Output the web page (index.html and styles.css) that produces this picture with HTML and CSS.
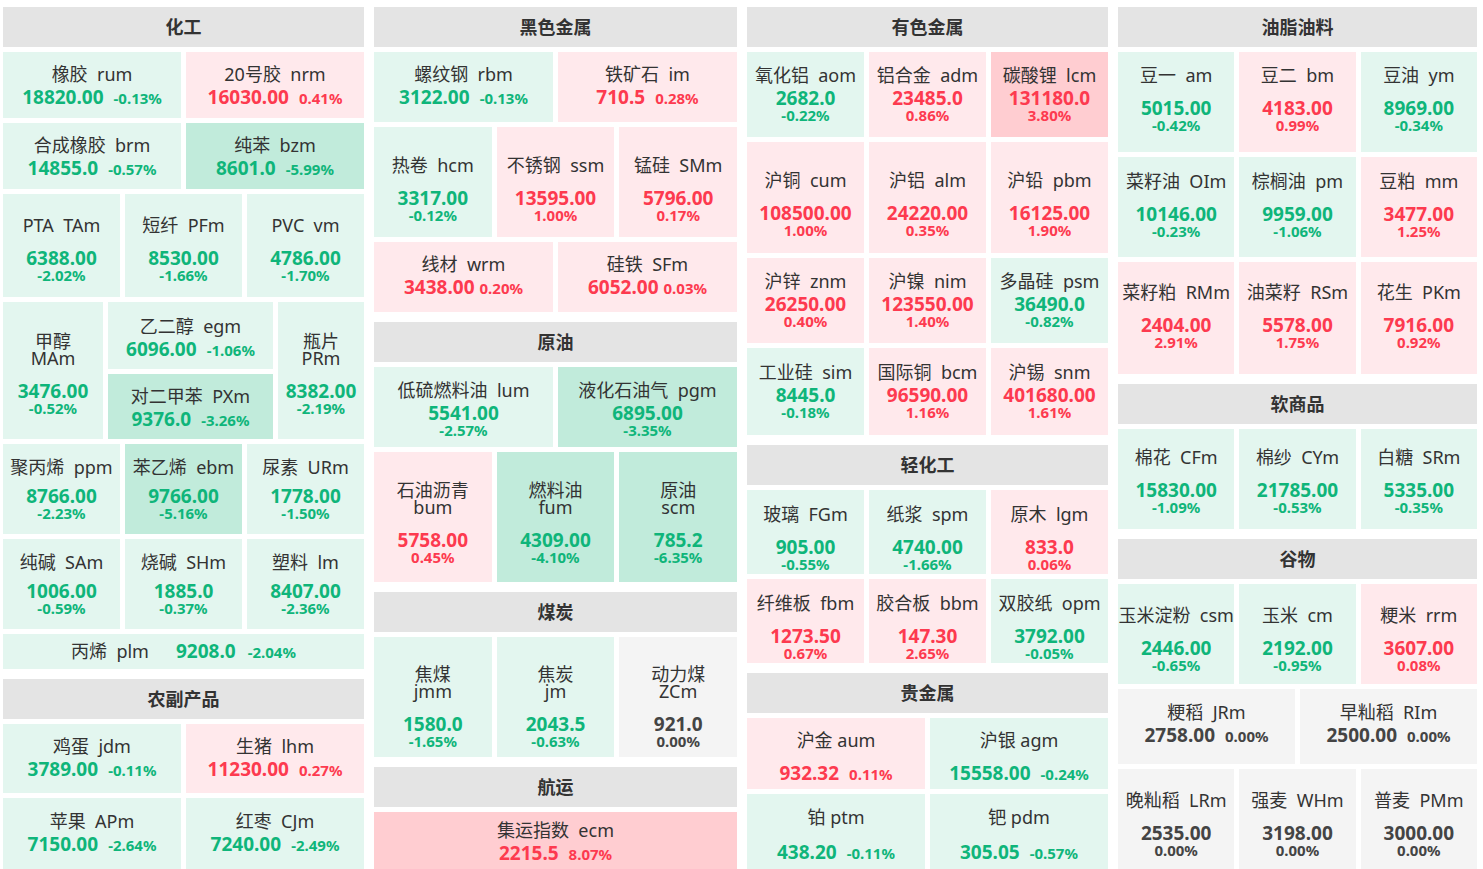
FILE: index.html
```html
<!DOCTYPE html>
<html lang="zh-CN">
<head>
<meta charset="utf-8">
<title>期货板块行情</title>
<link rel="stylesheet" href="styles.css">
</head>
<body>
<main class="board">
  <div class="col">
    <section class="sec">
      <h2 class="hd">化工</h2>
      <div class="row h66">
        <div class="t g1 pt4"><div class="nm">橡胶&nbsp; rum</div><div class="ln"><b class="v">18820.00</b><b class="p">-0.13%</b></div></div>
        <div class="t r1 pt4"><div class="nm">20号胶&nbsp; nrm</div><div class="ln"><b class="v">16030.00</b><b class="p">0.41%</b></div></div>
      </div>
      <div class="row h66">
        <div class="t g1 pt4"><div class="nm">合成橡胶&nbsp; brm</div><div class="ln"><b class="v">14855.0</b><b class="p">-0.57%</b></div></div>
        <div class="t g2 pt4"><div class="nm">纯苯&nbsp; bzm</div><div class="ln"><b class="v">8601.0</b><b class="p">-5.99%</b></div></div>
      </div>
      <div class="row h103">
        <div class="t g1 lo pt8"><div class="nm">PTA&nbsp; TAm</div><b class="v">6388.00</b><b class="p">-2.02%</b></div>
        <div class="t g1 lo pt8"><div class="nm">短纤&nbsp; PFm</div><b class="v">8530.00</b><b class="p">-1.66%</b></div>
        <div class="t g1 lo pt8"><div class="nm">PVC&nbsp; vm</div><b class="v">4786.00</b><b class="p">-1.70%</b></div>
      </div>
      <div class="row h137">
        <div class="t g1 lo pt6 w100"><div class="nm">甲醇<br>MAm</div><b class="v">3476.00</b><b class="p">-0.52%</b></div>
        <div class="stk w165">
          <div class="t g1 pt6"><div class="nm">乙二醇&nbsp; egm</div><div class="ln"><b class="v">6096.00</b><b class="p">-1.06%</b></div></div>
          <div class="t g2 pt4"><div class="nm">对二甲苯&nbsp; PXm</div><div class="ln"><b class="v">9376.0</b><b class="p">-3.26%</b></div></div>
        </div>
        <div class="t g1 lo pt6"><div class="nm">瓶片<br>PRm</div><b class="v">8382.00</b><b class="p">-2.19%</b></div>
      </div>
      <div class="row h90">
        <div class="t g1 md"><div class="nm">聚丙烯&nbsp; ppm</div><b class="v">8766.00</b><b class="p">-2.23%</b></div>
        <div class="t g2 md"><div class="nm">苯乙烯&nbsp; ebm</div><b class="v">9766.00</b><b class="p">-5.16%</b></div>
        <div class="t g1 md"><div class="nm">尿素&nbsp; URm</div><b class="v">1778.00</b><b class="p">-1.50%</b></div>
      </div>
      <div class="row h90">
        <div class="t g1 md"><div class="nm">纯碱&nbsp; SAm</div><b class="v">1006.00</b><b class="p">-0.59%</b></div>
        <div class="t g1 md"><div class="nm">烧碱&nbsp; SHm</div><b class="v">1885.0</b><b class="p">-0.37%</b></div>
        <div class="t g1 md"><div class="nm">塑料&nbsp; lm</div><b class="v">8407.00</b><b class="p">-2.36%</b></div>
      </div>
      <div class="row h35">
        <div class="t g1 one"><span class="nm">丙烯&nbsp; plm</span><b class="v">9208.0</b><b class="p">-2.04%</b></div>
      </div>
    </section>
    <section class="sec">
      <h2 class="hd">农副产品</h2>
      <div class="row h69">
        <div class="t g1"><div class="nm">鸡蛋&nbsp; jdm</div><div class="ln"><b class="v">3789.00</b><b class="p">-0.11%</b></div></div>
        <div class="t r1"><div class="nm">生猪&nbsp; lhm</div><div class="ln"><b class="v">11230.00</b><b class="p">0.27%</b></div></div>
      </div>
      <div class="row h71">
        <div class="t g1"><div class="nm">苹果&nbsp; APm</div><div class="ln"><b class="v">7150.00</b><b class="p">-2.64%</b></div></div>
        <div class="t g1"><div class="nm">红枣&nbsp; CJm</div><div class="ln"><b class="v">7240.00</b><b class="p">-2.49%</b></div></div>
      </div>
    </section>
  </div>

  <div class="col">
    <section class="sec">
      <h2 class="hd">黑色金属</h2>
      <div class="row h70">
        <div class="t g1"><div class="nm">螺纹钢&nbsp; rbm</div><div class="ln"><b class="v">3122.00</b><b class="p">-0.13%</b></div></div>
        <div class="t r1"><div class="nm">铁矿石&nbsp; im</div><div class="ln"><b class="v">710.5</b><b class="p">0.28%</b></div></div>
      </div>
      <div class="row h110">
        <div class="t g1 lo pt14"><div class="nm">热卷&nbsp; hcm</div><b class="v">3317.00</b><b class="p">-0.12%</b></div>
        <div class="t r1 lo pt14"><div class="nm">不锈钢&nbsp; ssm</div><b class="v">13595.00</b><b class="p">1.00%</b></div>
        <div class="t r1 lo pt14"><div class="nm">锰硅&nbsp; SMm</div><b class="v">5796.00</b><b class="p">0.17%</b></div>
      </div>
      <div class="row h70">
        <div class="t r1"><div class="nm">线材&nbsp; wrm</div><div class="ln tg"><b class="v">3438.00</b><b class="p">0.20%</b></div></div>
        <div class="t r1"><div class="nm">硅铁&nbsp; SFm</div><div class="ln tg"><b class="v">6052.00</b><b class="p">0.03%</b></div></div>
      </div>
    </section>
    <section class="sec">
      <h2 class="hd">原油</h2>
      <div class="row h80">
        <div class="t g1 pt4"><div class="nm">低硫燃料油&nbsp; lum</div><b class="v">5541.00</b><b class="p">-2.57%</b></div>
        <div class="t g2 pt4"><div class="nm">液化石油气&nbsp; pgm</div><b class="v">6895.00</b><b class="p">-3.35%</b></div>
      </div>
      <div class="row h130">
        <div class="t r1 lo pt12"><div class="nm">石油沥青<br>bum</div><b class="v">5758.00</b><b class="p">0.45%</b></div>
        <div class="t g2 lo pt12"><div class="nm">燃料油<br>fum</div><b class="v">4309.00</b><b class="p">-4.10%</b></div>
        <div class="t g2 lo pt12"><div class="nm">原油<br>scm</div><b class="v">785.2</b><b class="p">-6.35%</b></div>
      </div>
    </section>
    <section class="sec">
      <h2 class="hd">煤炭</h2>
      <div class="row h120">
        <div class="t g1 lo pt20"><div class="nm">焦煤<br>jmm</div><b class="v">1580.0</b><b class="p">-1.65%</b></div>
        <div class="t g1 lo pt20"><div class="nm">焦炭<br>jm</div><b class="v">2043.5</b><b class="p">-0.63%</b></div>
        <div class="t z lo pt20"><div class="nm">动力煤<br>ZCm</div><b class="v">921.0</b><b class="p">0.00%</b></div>
      </div>
    </section>
    <section class="sec">
      <h2 class="hd">航运</h2>
      <div class="row h57">
        <div class="t r2 pt4"><div class="nm">集运指数&nbsp; ecm</div><div class="ln"><b class="v">2215.5</b><b class="p">8.07%</b></div></div>
      </div>
    </section>
  </div>

  <div class="col">
    <section class="sec">
      <h2 class="hd">有色金属</h2>
      <div class="row h85">
        <div class="t g1"><div class="nm">氧化铝&nbsp; aom</div><b class="v">2682.0</b><b class="p">-0.22%</b></div>
        <div class="t r1"><div class="nm">铝合金&nbsp; adm</div><b class="v">23485.0</b><b class="p">0.86%</b></div>
        <div class="t r2"><div class="nm">碳酸锂&nbsp; lcm</div><b class="v">131180.0</b><b class="p">3.80%</b></div>
      </div>
      <div class="row h111">
        <div class="t r1 lo pt14"><div class="nm">沪铜&nbsp; cum</div><b class="v">108500.00</b><b class="p">1.00%</b></div>
        <div class="t r1 lo pt14"><div class="nm">沪铝&nbsp; alm</div><b class="v">24220.00</b><b class="p">0.35%</b></div>
        <div class="t r1 lo pt14"><div class="nm">沪铅&nbsp; pbm</div><b class="v">16125.00</b><b class="p">1.90%</b></div>
      </div>
      <div class="row h85">
        <div class="t r1"><div class="nm">沪锌&nbsp; znm</div><b class="v">26250.00</b><b class="p">0.40%</b></div>
        <div class="t r1"><div class="nm">沪镍&nbsp; nim</div><b class="v">123550.00</b><b class="p">1.40%</b></div>
        <div class="t g1"><div class="nm">多晶硅&nbsp; psm</div><b class="v">36490.0</b><b class="p">-0.82%</b></div>
      </div>
      <div class="row h87">
        <div class="t g1"><div class="nm">工业硅&nbsp; sim</div><b class="v">8445.0</b><b class="p">-0.18%</b></div>
        <div class="t r1"><div class="nm">国际铜&nbsp; bcm</div><b class="v">96590.00</b><b class="p">1.16%</b></div>
        <div class="t r1"><div class="nm">沪锡&nbsp; snm</div><b class="v">401680.00</b><b class="p">1.61%</b></div>
      </div>
    </section>
    <section class="sec">
      <h2 class="hd">轻化工</h2>
      <div class="row h84">
        <div class="t g1 lo pt12"><div class="nm">玻璃&nbsp; FGm</div><b class="v">905.00</b><b class="p">-0.55%</b></div>
        <div class="t g1 lo pt12"><div class="nm">纸浆&nbsp; spm</div><b class="v">4740.00</b><b class="p">-1.66%</b></div>
        <div class="t r1 lo pt12"><div class="nm">原木&nbsp; lgm</div><b class="v">833.0</b><b class="p">0.06%</b></div>
      </div>
      <div class="row h84">
        <div class="t r1 lo pt12"><div class="nm">纤维板&nbsp; fbm</div><b class="v">1273.50</b><b class="p">0.67%</b></div>
        <div class="t r1 lo pt12"><div class="nm">胶合板&nbsp; bbm</div><b class="v">147.30</b><b class="p">2.65%</b></div>
        <div class="t g1 lo pt12"><div class="nm">双胶纸&nbsp; opm</div><b class="v">3792.00</b><b class="p">-0.05%</b></div>
      </div>
    </section>
    <section class="sec">
      <h2 class="hd">贵金属</h2>
      <div class="row h71">
        <div class="t r1 lo pt8"><div class="nm">沪金 aum</div><div class="ln"><b class="v">932.32</b><b class="p">0.11%</b></div></div>
        <div class="t g1 lo pt8"><div class="nm">沪银 agm</div><div class="ln"><b class="v">15558.00</b><b class="p">-0.24%</b></div></div>
      </div>
      <div class="row h75">
        <div class="t g1 lx pt8"><div class="nm">铂 ptm</div><div class="ln"><b class="v">438.20</b><b class="p">-0.11%</b></div></div>
        <div class="t g1 lx pt8"><div class="nm">钯 pdm</div><div class="ln"><b class="v">305.05</b><b class="p">-0.57%</b></div></div>
      </div>
    </section>
  </div>

  <div class="col">
    <section class="sec">
      <h2 class="hd">油脂油料</h2>
      <div class="row h100">
        <div class="t g1 lo pb6"><div class="nm">豆一&nbsp; am</div><b class="v">5015.00</b><b class="p">-0.42%</b></div>
        <div class="t r1 lo pb6"><div class="nm">豆二&nbsp; bm</div><b class="v">4183.00</b><b class="p">0.99%</b></div>
        <div class="t g1 lo pb6"><div class="nm">豆油&nbsp; ym</div><b class="v">8969.00</b><b class="p">-0.34%</b></div>
      </div>
      <div class="row h100">
        <div class="t g1 lo pb4"><div class="nm">菜籽油&nbsp; OIm</div><b class="v">10146.00</b><b class="p">-0.23%</b></div>
        <div class="t g1 lo pb4"><div class="nm">棕榈油&nbsp; pm</div><b class="v">9959.00</b><b class="p">-1.06%</b></div>
        <div class="t r1 lo pb4"><div class="nm">豆粕&nbsp; mm</div><b class="v">3477.00</b><b class="p">1.25%</b></div>
      </div>
      <div class="row h112">
        <div class="t r1 lo pb4"><div class="nm">菜籽粕&nbsp; RMm</div><b class="v">2404.00</b><b class="p">2.91%</b></div>
        <div class="t r1 lo pb4"><div class="nm">油菜籽&nbsp; RSm</div><b class="v">5578.00</b><b class="p">1.75%</b></div>
        <div class="t r1 lo pb4"><div class="nm">花生&nbsp; PKm</div><b class="v">7916.00</b><b class="p">0.92%</b></div>
      </div>
    </section>
    <section class="sec">
      <h2 class="hd">软商品</h2>
      <div class="row h100">
        <div class="t g1 lo pt4"><div class="nm">棉花&nbsp; CFm</div><b class="v">15830.00</b><b class="p">-1.09%</b></div>
        <div class="t g1 lo pt4"><div class="nm">棉纱&nbsp; CYm</div><b class="v">21785.00</b><b class="p">-0.53%</b></div>
        <div class="t g1 lo pt4"><div class="nm">白糖&nbsp; SRm</div><b class="v">5335.00</b><b class="p">-0.35%</b></div>
      </div>
    </section>
    <section class="sec">
      <h2 class="hd">谷物</h2>
      <div class="row h100">
        <div class="t g1 lo pt10"><div class="nm">玉米淀粉&nbsp; csm</div><b class="v">2446.00</b><b class="p">-0.65%</b></div>
        <div class="t g1 lo pt10"><div class="nm">玉米&nbsp; cm</div><b class="v">2192.00</b><b class="p">-0.95%</b></div>
        <div class="t r1 lo pt10"><div class="nm">粳米&nbsp; rrm</div><b class="v">3607.00</b><b class="p">0.08%</b></div>
      </div>
      <div class="row h75">
        <div class="t z pb4"><div class="nm">粳稻&nbsp; JRm</div><div class="ln"><b class="v">2758.00</b><b class="p">0.00%</b></div></div>
        <div class="t z pb4"><div class="nm">早籼稻&nbsp; RIm</div><div class="ln"><b class="v">2500.00</b><b class="p">0.00%</b></div></div>
      </div>
      <div class="row h100">
        <div class="t z lo pt10"><div class="nm">晚籼稻&nbsp; LRm</div><b class="v">2535.00</b><b class="p">0.00%</b></div>
        <div class="t z lo pt10"><div class="nm">强麦&nbsp; WHm</div><b class="v">3198.00</b><b class="p">0.00%</b></div>
        <div class="t z lo pt10"><div class="nm">普麦&nbsp; PMm</div><b class="v">3000.00</b><b class="p">0.00%</b></div>
      </div>
    </section>
  </div>
</main>
</body>
</html>
```

FILE: styles.css
```css
* { box-sizing: border-box; margin: 0; padding: 0; }
html, body { background: #fff; }
body {
  font-family: "Noto Sans", "Noto Sans CJK SC", sans-serif;
  color: #333;
  padding: 7px 6px 0 3px;
  height: 869px;
  overflow: hidden;
}
.board {
  display: grid;
  grid-template-columns: 361px 363px 361px 359px;
  column-gap: 10px;
  align-items: start;
}
.col { display: flex; flex-direction: column; gap: 10px; }
.sec { display: flex; flex-direction: column; gap: 5px; }
.hd {
  height: 40px;
  line-height: 40px;
  background: #e4e4e4;
  text-align: center;
  font-size: 18px;
  font-weight: 700;
  color: #333;
}
.row { display: flex; gap: 5px; }
.row > .t { flex: 1 1 0; min-width: 0; }
.stk { display: flex; flex-direction: column; gap: 5px; }
.stk > .t { flex: 1 1 0; }
.row > .w100 { flex: 0 0 100px; }
.w165 { flex: 0 0 165px; }

.h35 { height: 35px; } .h57 { height: 57px; } .h66 { height: 66px; }
.h69 { height: 69px; } .h70 { height: 70px; } .h71 { height: 71px; }
.h75 { height: 75px; } .h80 { height: 80px; } .h84 { height: 84px; }
.h85 { height: 85px; } .h87 { height: 87px; } .h90 { height: 90px; }
.h100 { height: 100px; } .h103 { height: 103px; } .h110 { height: 110px; }
.h111 { height: 111px; } .h112 { height: 112px; } .h120 { height: 120px; }
.h130 { height: 130px; } .h137 { height: 137px; }

.t {
  display: flex;
  flex-direction: column;
  align-items: center;
  justify-content: center;
  text-align: center;
  white-space: nowrap;
}
.g1 { background: #e3f6ef; color: #0fb57a; }
.g2 { background: #c1ebdb; color: #0fb57a; }
.r1 { background: #ffe9ec; color: #fd3a4f; }
.r2 { background: #ffcdd1; color: #fd3a4f; }
.z { background: #f4f4f4; color: #444; }

.nm { font-size: 18px; line-height: 17px; margin-bottom: 4px; color: #333; }
.md .nm { margin-bottom: 10px; }
.lo .nm { margin-bottom: 14px; }
.lx .nm { margin-bottom: 16px; }
.v { display: block; font-size: 19px; font-weight: 700; line-height: 20px; }
.p { display: block; font-size: 15px; font-weight: 700; line-height: 14px; }
.ln { display: flex; align-items: baseline; line-height: 20px; }
.ln .p { line-height: 20px; margin-left: 10px; }
.ln.tg .p { margin-left: 5px; }

.one { flex-direction: row; align-items: baseline; }
.one .nm { margin: 0; line-height: 35px; }
.one .v { margin-left: 27px; line-height: 35px; }
.one .p { margin-left: 12px; line-height: 35px; }

.pt4 { padding-top: 4px; } .pt6 { padding-top: 6px; } .pt8 { padding-top: 8px; }
.pt10 { padding-top: 10px; } .pt12 { padding-top: 12px; } .pt14 { padding-top: 14px; }
.pt20 { padding-top: 20px; }
.pb4 { padding-bottom: 4px; } .pb6 { padding-bottom: 6px; }
```
